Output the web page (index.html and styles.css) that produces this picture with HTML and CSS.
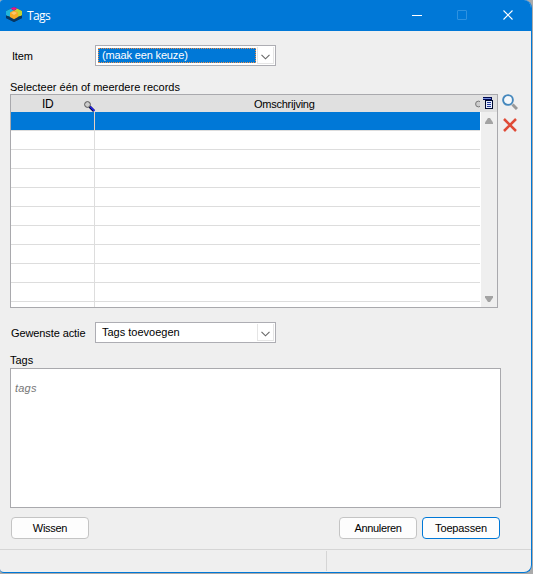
FILE: index.html
```
<!DOCTYPE html>
<html lang="nl">
<head>
<meta charset="utf-8">
<title>Tags</title>
<link rel="stylesheet" href="styles.css">
</head>
<body>
<div class="window">
  <header class="titlebar">
    <svg class="logo" width="16" height="16" viewBox="0 0 16 16">
      <path d="M0 4 8 0 16 4v7l-8 4-8-4z" fill="#073763"/>
      <path d="M0 4 5 1.500 8 4v7L0 8.500z" fill="#20b5dc"/>
      <path d="M16 4 11 1.500 8 4v7l8-2.500z" fill="#c5d331"/>
      <path d="M4.500 1.500 8 0l3.500 1.500L8 3.500z" fill="#e51788"/>
      <path d="M0 8.500 8 12l8-3.500V11l-8 4-8-4z" fill="#073763"/>
      <path d="M4 5.500 8 3.300l4 2.200v4.500l-4 2.300L4 10z" fill="#f7a823"/>
      <path d="m5 6 3-1.500L11 6 8 8z" fill="#ffc66a"/>
    </svg>
    <h1 class="title"><span class="t-title">Tags</span></h1>
    <svg class="controls" width="102" height="12" viewBox="0 0 102 12" fill="none">
      <path d="M0 6.500h10" stroke="#fff"/>
      <rect x="45.500" y="1.500" width="9" height="9" rx=".5" stroke="#2f92e0"/>
      <path d="m91.500 1.500 9 9m0-9-9 9" stroke="#fff" stroke-width="1.100"/>
    </svg>
  </header>
  <main class="content">
    <div class="field">
      <label class="label"><span class="t-item">Item</span></label>
      <div class="combo">
        <span class="value selected"><span class="t-choice">(maak een keuze)</span></span>
        <span class="drop"><svg width="9" height="6" viewBox="0 0 9 6"><path d="m.5 .8 4 4 4-4" fill="none" stroke="#666" stroke-width="1.100"/></svg></span>
      </div>
    </div>
    <div class="caption records"><span class="t-records">Selecteer één of meerdere records</span></div>
    <div class="picker">
      <div class="grid">
        <div class="grid-head">
          <div class="head-id"><span class="t-id">ID</span>
            <svg class="head-search" width="11" height="11" viewBox="0 0 11 11"><path d="m5.500 5.500 4.500 4.500" stroke="#00003c" stroke-width="2.600"/><path d="m6 5.500 4.500 4.500" stroke="#2424ee" stroke-width="1.500"/><circle cx="3.500" cy="3.500" r="2.900" fill="#ccc" stroke="#555"/></svg>
          </div>
          <div class="head-desc"><span class="t-desc">Omschrijving</span>
            <svg class="head-half" width="5" height="8" viewBox="0 0 5 8"><circle cx="3.500" cy="4" r="2.900" fill="#ccc" stroke="#777"/></svg>
          </div>
          <div class="head-menu"><svg width="10" height="12" viewBox="0 0 10 12" shape-rendering="crispEdges"><path d="M0 0h9v3H0z" fill="#000a50"/><path d="M0 1h8v1H0z" fill="#7890e0"/><path d="M2 3h7l1 1v8H2z" fill="#000a30"/><path d="M3 4h6v7H3z" fill="#e6edff"/><path d="M4 5h4v1H4zM4 7h4v1H4zM4 9h4v1H4z" fill="#253c9c"/></svg></div>
        </div>
        <div class="grid-body">
          <div class="rows">
            <div class="row active"><i></i><i></i></div>
            <div class="row"><i></i><i></i></div>
            <div class="row"><i></i><i></i></div>
            <div class="row"><i></i><i></i></div>
            <div class="row"><i></i><i></i></div>
            <div class="row"><i></i><i></i></div>
            <div class="row"><i></i><i></i></div>
            <div class="row"><i></i><i></i></div>
            <div class="row"><i></i><i></i></div>
            <div class="row"><i></i><i></i></div>
            <div class="row"><i></i><i></i></div>
          </div>
          <div class="scroll">
            <svg width="8" height="6" viewBox="0 0 8 6"><path d="M3 0h2l3 4.500V6H0V4.500z" fill="#a3a3a3"/></svg>
            <svg width="8" height="6" viewBox="0 0 8 6"><path d="M0 0h8v1.500L5 6H3L0 1.500z" fill="#a3a3a3"/></svg>
          </div>
        </div>
      </div>
      <div class="tools">
        <svg width="16" height="16" viewBox="0 0 16 16" fill="none"><path d="m10.500 10.500 4.500 4.500" stroke="#999" stroke-width="3"/><circle cx="6" cy="6" r="4.900" fill="#f5f8fb" stroke="#4588bd" stroke-width="1.900"/></svg>
        <svg width="14" height="14" viewBox="0 0 14 14"><path d="m1 1 12 12M13 1 1 13" stroke="#df4b37" stroke-width="2.500"/></svg>
      </div>
    </div>
    <div class="field action">
      <label class="label"><span class="t-action">Gewenste actie</span></label>
      <div class="combo">
        <span class="value"><span class="t-add">Tags toevoegen</span></span>
        <span class="drop"><svg width="9" height="6" viewBox="0 0 9 6"><path d="m.5 .8 4 4 4-4" fill="none" stroke="#666" stroke-width="1.100"/></svg></span>
      </div>
    </div>
    <div class="caption tags"><span class="t-tags">Tags</span></div>
    <div class="tagbox"><span class="t-ph">tags</span></div>
    <div class="buttons">
      <button class="btn"><span class="t-wissen">Wissen</span></button>
      <button class="btn cancel"><span class="t-annul">Annuleren</span></button>
      <button class="btn primary"><span class="t-apply">Toepassen</span></button>
    </div>
  </main>
  <footer class="status"><div class="pane"></div></footer>
</div>
</body>
</html>
```
FILE: styles.css
```
* { box-sizing: border-box; }
body {
  margin: 0;
  height: 574px;
  overflow: hidden;
  background: #aaa;
  color: #000;
  font: 11px/14px "Liberation Sans", Arial, sans-serif;
}
span { white-space: nowrap; }
svg { display: block; flex: none; }
.window {
  display: flex;
  flex-direction: column;
  width: 532px;
  height: 573px;
  overflow: hidden;
  background: #efefef;
  border: solid #0078d7;
  border-width: 0 1px 1px 0;
  border-radius: 3px 8px 8px 4px;
}
.titlebar {
  display: flex;
  align-items: center;
  flex: none;
  height: 31px;
  padding-left: 6px;
  background: #0078d7;
  color: #fff;
}
.logo { margin-top: -2px; }
.title { margin: 1px 0 0 5px; font: 12px/16px "Open Sans", "Noto Sans", sans-serif; }
.controls { margin: -1px 17px 0 auto; }
.content { flex: none; height: 518px; padding: 14px 0 0 10px; }
.field { display: flex; align-items: center; height: 21px; }
.label { width: 85px; padding-left: 1px; }
.combo {
  display: flex;
  width: 181px;
  height: 21px;
  padding: 2px 1px 2px 2px;
  background: #fff;
  border: 1px solid #adadb3;
}
.value { width: 158px; height: 15px; padding-left: 4px; line-height: 15px; }
.selected { color: #fff; background: #0078d7; outline: 1px dotted #ef9149; outline-offset: -1px; }
.drop {
  display: flex;
  align-items: center;
  justify-content: center;
  width: 17px;
  height: 17px;
  margin: -1px 0 0 1px;
  padding-top: 3px;
  border: solid #e5e5e5;
  border-width: 0 1px 1px;
}
.caption { height: 14px; }
.records { margin-top: 14px; }
.picker { display: flex; align-items: flex-start; }
.grid { width: 488px; height: 214px; overflow: hidden; background: #fff; border: 1px solid #a9a9ad; }
.grid-head { display: flex; height: 17px; background: #e0e0e0; line-height: 18px; }
.head-id { position: relative; width: 84px; padding-left: 31px; }
.head-search { position: absolute; left: 73px; top: 6px; }
.head-desc { position: relative; width: 386px; padding-left: 159px; }
.head-half { position: absolute; right: 1px; top: 5px; }
.head-menu { padding: 2px 0 0 2px; }
.grid-body { display: flex; height: 195px; }
.rows { flex: none; width: 469px; height: 195px; overflow: hidden; }
.row { display: grid; grid-template-columns: 84px 385px; height: 19px; border-bottom: 1px solid #ddd; }
.row i:first-child { border-right: 1px solid #ddd; }
.active i { background: #0078d7; }
.active i:first-child { border-color: #e8d0c0; }
.scroll {
  display: flex;
  flex: none;
  flex-direction: column;
  align-items: center;
  justify-content: space-between;
  width: 16px;
  margin-left: 1px;
  padding: 6px 0 5px;
  background: #efefef;
}
.tools { display: flex; flex-direction: column; align-items: center; gap: 8px; margin-left: 4px; }
.action { margin-top: 14px; }
.tags { margin-top: 10px; }
.tagbox { width: 491px; height: 140px; margin-top: 1px; padding: 12px 4px; background: #fff; border: 1px solid #a9a9ad; color: #777; font-style: italic; }
.buttons { display: flex; margin-top: 9px; padding-left: 1px; }
.btn {
  width: 78px;
  height: 22px;
  padding: 0;
  font: inherit;
  color: #000;
  background: #fdfdfd;
  border: 1px solid #c4c4c4;
  border-radius: 4px;
}
.cancel { margin-left: 250px; }
.primary { margin-left: 5px; border-color: #0078d7; }
.status { flex: 1; padding-top: 1px; border-top: 1px solid #d5d5d5; }
.pane { width: 327px; height: 20px; border-right: 1px solid #d5d5d5; }
.t-title { letter-spacing: -.6px; }
.t-item { margin-left: 1px; letter-spacing: -.2px; }
.t-id { font-size: 12px; letter-spacing: -.3px; }
.t-choice { letter-spacing: -.15px; }
.t-desc { letter-spacing: -.25px; }
.t-action { letter-spacing: -.1px; }
.t-ph { letter-spacing: .2px; }
.t-wissen { letter-spacing: -.3px; }
.t-annul { letter-spacing: -.35px; }
.t-apply { letter-spacing: -.15px; }
```
